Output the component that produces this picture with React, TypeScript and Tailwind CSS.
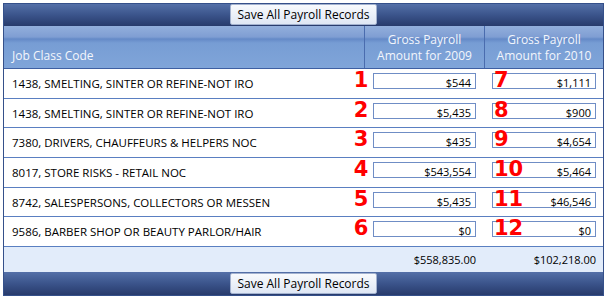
import React from "react";

// Payroll grid: one row per job class, two years of gross payroll.
const rows = [
  { code: "1438, SMELTING, SINTER OR REFINE-NOT IRO", y2009: "$544", y2010: "$1,111", n1: "1", n2: "7" },
  { code: "1438, SMELTING, SINTER OR REFINE-NOT IRO", y2009: "$5,435", y2010: "$900", n1: "2", n2: "8" },
  { code: "7380, DRIVERS, CHAUFFEURS & HELPERS NOC", y2009: "$435", y2010: "$4,654", n1: "3", n2: "9" },
  { code: "8017, STORE RISKS - RETAIL NOC", y2009: "$543,554", y2010: "$5,464", n1: "4", n2: "10" },
  { code: "8742, SALESPERSONS, COLLECTORS OR MESSEN", y2009: "$5,435", y2010: "$46,546", n1: "5", n2: "11" },
  { code: "9586, BARBER SHOP OR BEAUTY PARLOR/HAIR", y2009: "$0", y2010: "$0", n1: "6", n2: "12" },
];

function SaveBar({ bottom }: { bottom?: boolean }) {
  return (
    <div
      className={`flex justify-center bg-gradient-to-b from-[#5470a8] via-[#3b548b] to-[#283b6c] ${
        bottom ? "h-[23px] pt-[1px]" : "h-[22px]"
      }`}
    >
      <button
        type="button"
        className="h-[21px] w-[147px] rounded-[2px] border border-[#a3b2cf] bg-gradient-to-b from-[#f8fafd] to-[#dfe7f4] text-[12px] leading-[19px] text-black"
      >
        Save All Payroll Records
      </button>
    </div>
  );
}

function Cell({ value }: { value: string }) {
  return (
    <div className="h-[16px] border border-[#6f8dc5] bg-white pr-[4px] pt-[2px] text-right text-[11px] leading-[14px] text-black">
      {value}
    </div>
  );
}

export default function App() {
  return (
    <div className="h-[297px] w-[611px] bg-white pl-[3px] pt-[3px] font-['Open_Sans',sans-serif]">
      <div className="flex h-[293px] w-[601px] flex-col border border-[#35508a]">
        <SaveBar />

        {/* column headers */}
        <div className="flex h-[43px] border-b border-[#3e5fa2] bg-[linear-gradient(to_bottom,#93afdc_0px,#7f9ed3_11px,#6489c7_13px,#779dd4_17px,#80a5d9_100%)] text-[12px] leading-[16px] text-[#f3f6fc]">
          <div className="flex w-[360px] items-end pb-[4px] pl-[8px]">Job Class Code</div>
          <div className="flex w-[120px] items-end justify-center border-l border-[#4a6cae] pb-[4px] text-center">
            Gross Payroll
            <br />
            Amount for 2009
          </div>
          <div className="flex flex-1 items-end justify-center border-l border-[#4a6cae] pb-[4px] text-center">
            Gross Payroll
            <br />
            Amount for 2010
          </div>
        </div>

        {rows.map((r) => (
          <div key={r.n1} className="relative flex h-[29.67px] border-b border-[#5a7fc1] bg-white">
            <div className="w-[360px] pl-[8px] pt-[7px] text-[11.5px] leading-[15px] text-black">{r.code}</div>
            <div className="w-[120px] pl-[9px] pr-[8px] pt-[4px]">
              <Cell value={r.y2009} />
            </div>
            <div className="flex-1 pl-[8px] pr-[7px] pt-[4px]">
              <Cell value={r.y2010} />
            </div>
            <span className="absolute left-[341px] top-[1px] w-[32px] text-center font-['DejaVu_Sans',sans-serif] text-[21px] font-bold leading-[21px] text-[#ff0000]">
              {r.n1}
            </span>
            <span className="absolute left-[490px] top-[1px] font-['DejaVu_Sans',sans-serif] text-[21px] font-bold leading-[21px] text-[#ff0000]">
              {r.n2}
            </span>
          </div>
        ))}

        {/* totals */}
        <div className="flex h-[25px] bg-[#e2ecfa] pt-[5px] text-[11px] leading-[15px] text-black">
          <div className="w-[360px]" />
          <div className="w-[120px] pr-[8px] text-right">$558,835.00</div>
          <div className="flex-1 pr-[7px] text-right">$102,218.00</div>
        </div>

        <SaveBar bottom />
      </div>
    </div>
  );
}
